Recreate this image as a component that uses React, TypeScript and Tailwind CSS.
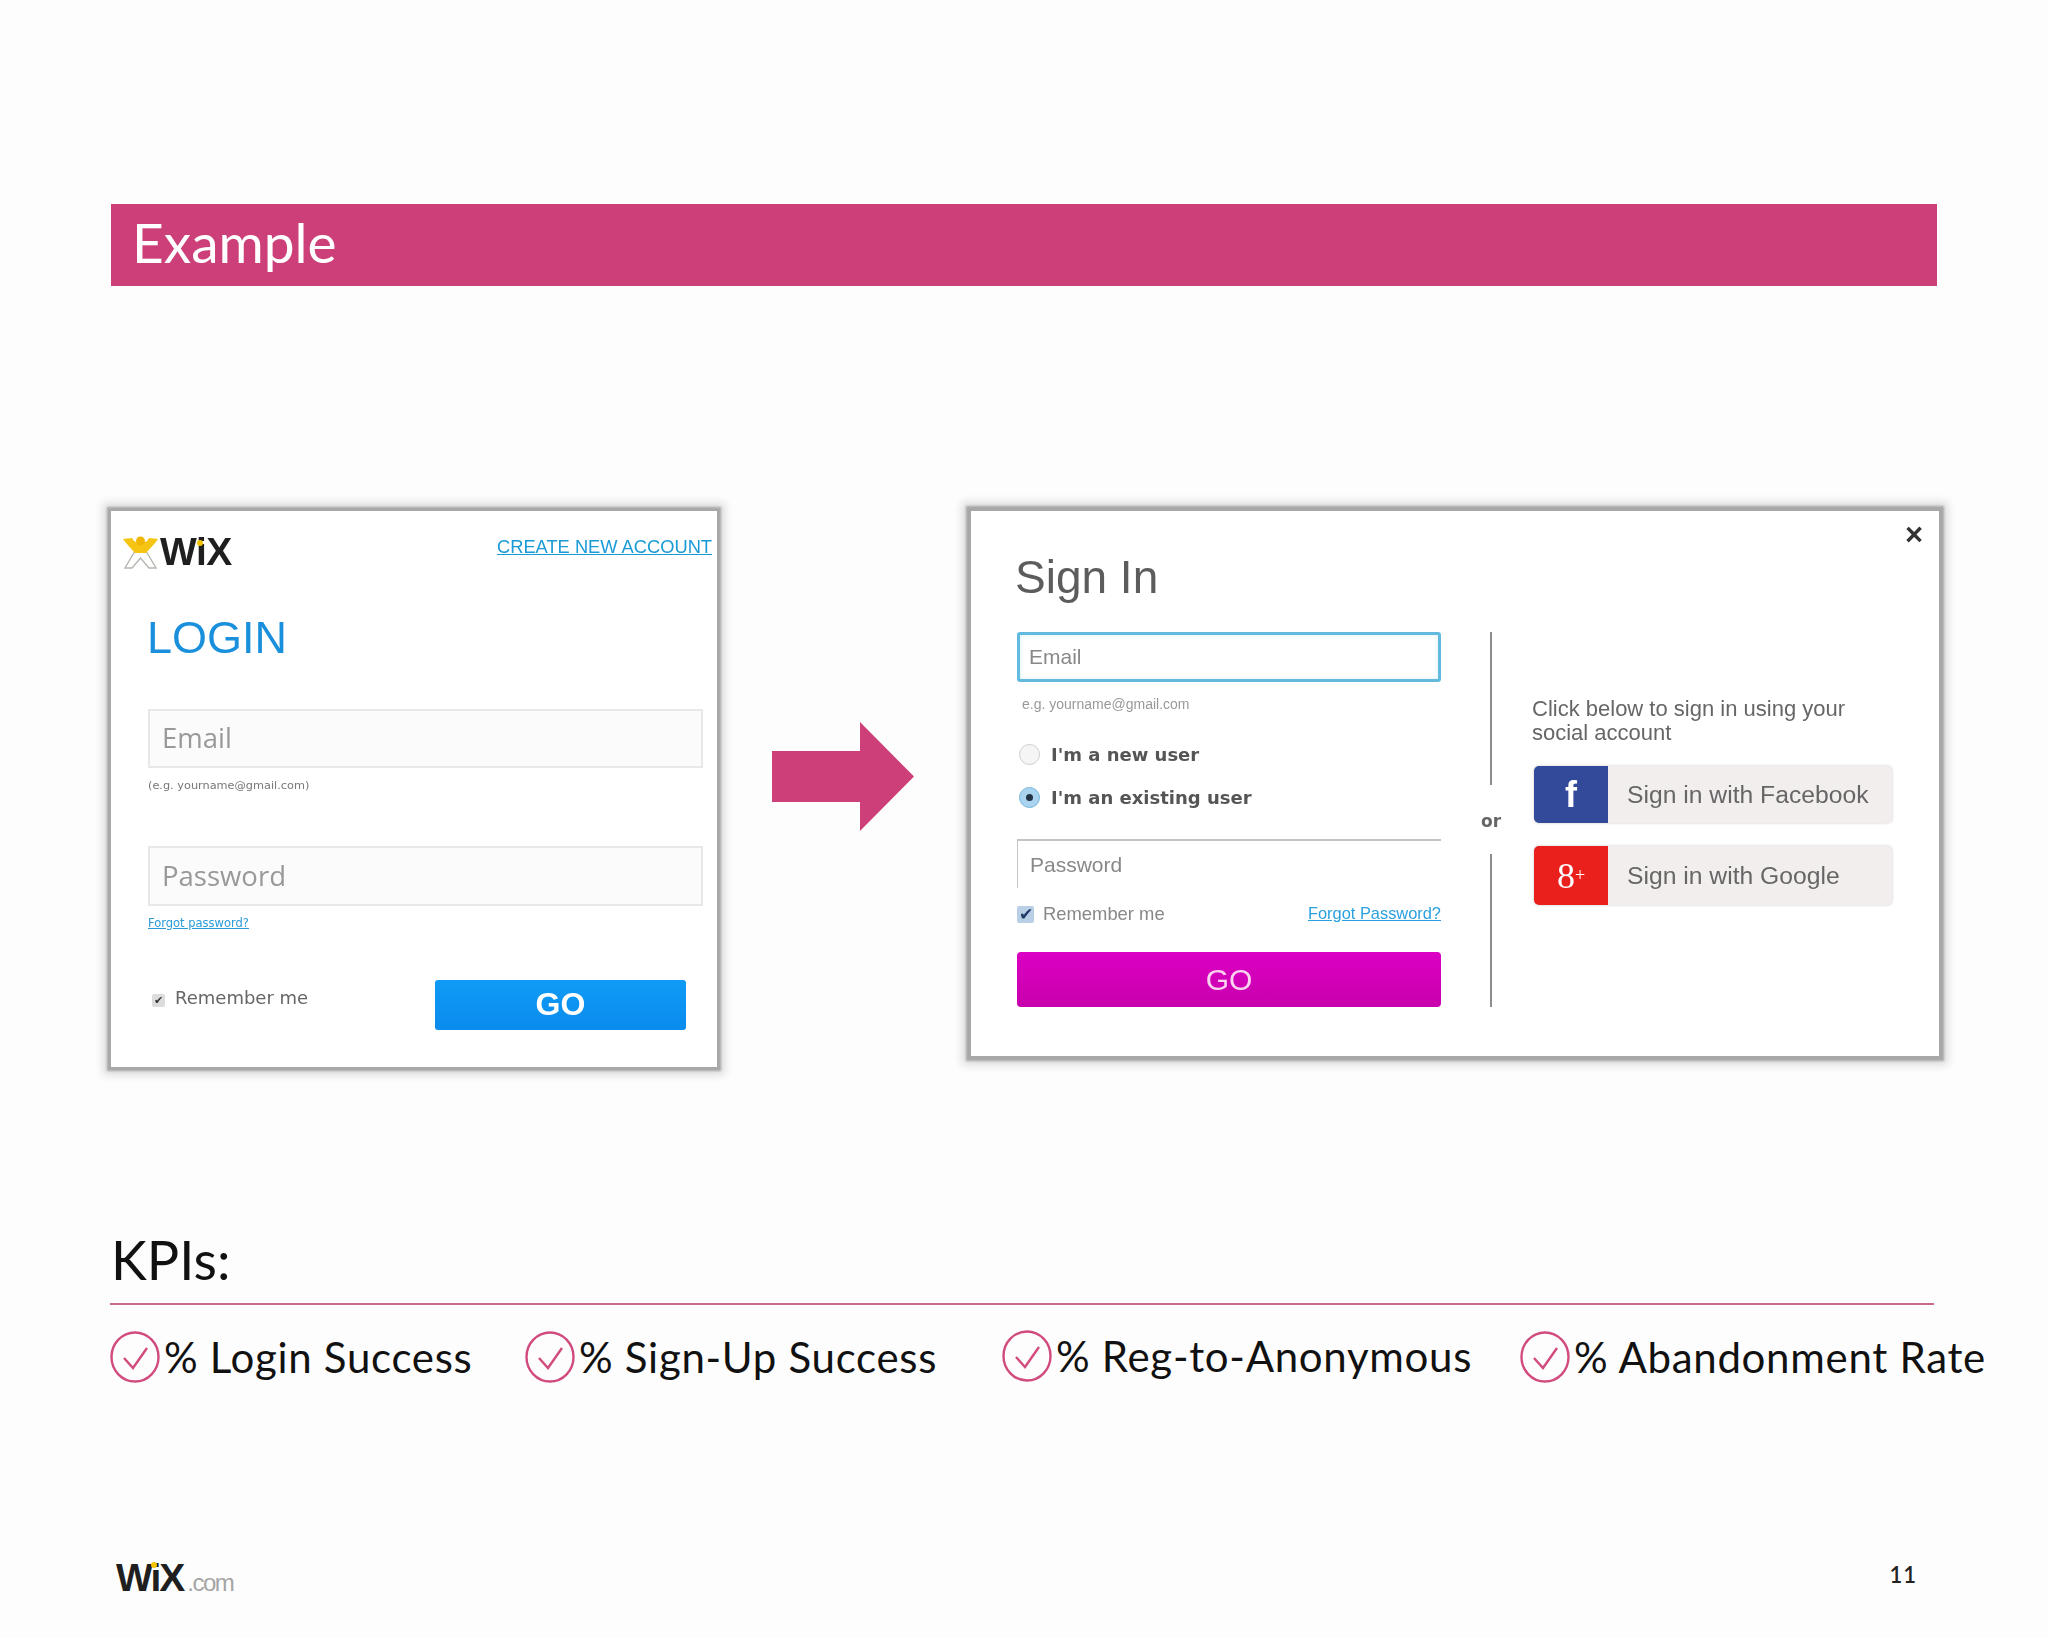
import type { ReactNode } from 'react'

const kpis = [
  { label: '% Login Success', width: 'w-[415px]', offset: '' },
  { label: '% Sign-Up Success', width: 'w-[477px]', offset: '' },
  { label: '% Reg-to-Anonymous', width: 'w-[518px]', offset: '-mt-[3px]' },
  { label: '% Abandonment Rate', width: 'w-[480px]', offset: '' },
]

function WixWord({ size, dot }: { size: string; dot: string }) {
  return (
    <span className={`relative font-['Liberation_Sans',sans-serif] font-bold text-[#1f1f1f] ${size}`}>
      WiX
      <span className={`absolute rounded-full bg-[#f4c400] ${dot}`} />
    </span>
  )
}

function Mascot() {
  return (
    <svg width="35" height="33" viewBox="0 0 35 33" className="shrink-0">
      <path d="M12 15 L2 32 L9 32 L17.5 22 L26 32 L33 32 L23 15" fill="#fff" stroke="#b5b5b0" strokeWidth="1.4" />
      <path
        d="M0 3 L9 2 C11 6 14 7 17.5 7 C21 7 24 6 26 2 L35 3 C32 8 27 12 23 17 L12 17 C8 12 3 8 0 3Z"
        fill="#f6c513"
      />
      <circle cx="17.5" cy="5" r="4.5" fill="#f2b705" />
    </svg>
  )
}

function KpiCheck() {
  return (
    <svg width="50" height="52" viewBox="0 0 50 52" className="shrink-0">
      <ellipse cx="25" cy="26" rx="23.5" ry="24.5" fill="none" stroke="#d14b7e" strokeWidth="2.4" />
      <path d="M14 27 L23 37 L37 17" fill="none" stroke="#d14b7e" strokeWidth="2.4" />
    </svg>
  )
}

function LeftCard() {
  return (
    <div className="h-[556px] w-[606px] shrink-0 bg-white shadow-[0_0_2px_4px_#a8a8a8,0_0_8px_8px_#dcdcdc]">
      <div className="flex h-full flex-col blur-[0.5px]">
        <div className="flex items-start justify-between pt-[26px] pr-[5px] pl-[12px]">
          <div className="flex h-[30px] items-center gap-[2px] leading-[30px]">
            <Mascot />
            <WixWord size="text-[39px] tracking-[-0.5px]" dot="top-[3px] left-[37px] h-[6px] w-[6px]" />
          </div>
          <a className="font-['Liberation_Sans',sans-serif] text-[18.3px] leading-[20px] text-[#1a9ad6] underline">
            CREATE NEW ACCOUNT
          </a>
        </div>
        <h2 className="mt-[48px] ml-[36px] font-['Liberation_Sans',sans-serif] text-[45px] leading-[46px] text-[#1a90dd]">
          LOGIN
        </h2>
        <div className="mt-[48px] ml-[37px] flex h-[59px] w-[555px] items-center border-2 border-[#e9e7e9] bg-[#fbfbfb] pb-[2px] pl-[12px] font-['Open_Sans',sans-serif] text-[27.5px] text-[#999]">
          Email
        </div>
        <p className="mt-[10px] ml-[37px] font-['DejaVu_Sans',sans-serif] text-[11.3px] leading-[16px] text-[#777]">
          (e.g. yourname@gmail.com)
        </p>
        <div className="mt-[52px] ml-[37px] flex h-[60px] w-[555px] items-center border-2 border-[#e9e7e9] bg-[#fbfbfb] pl-[12px] font-['Open_Sans',sans-serif] text-[27.5px] text-[#999]">
          Password
        </div>
        <a className="mt-[9px] ml-[37px] font-['DejaVu_Sans',sans-serif] text-[11.5px] leading-[16px] text-[#2a9bd8] underline">
          Forgot password?
        </a>
        <div className="mt-[49px] ml-[37px] flex w-[538px] items-start justify-between">
          <label className="mt-[7px] ml-[4px] flex h-[20px] items-center gap-[10px] font-['DejaVu_Sans',sans-serif] text-[18px] text-[#666]">
            <span className="mt-[6px] flex h-[13px] w-[13px] items-center justify-center rounded-[2px] bg-[#dcdcdc] text-[11px] leading-none text-[#333]">
              ✔
            </span>
            Remember me
          </label>
          <button className="h-[50px] w-[251px] rounded-[3px] bg-gradient-to-b from-[#0f9bf5] to-[#0a8bee] pb-[2px] font-['Liberation_Sans',sans-serif] text-[32px] font-bold text-white">
            GO
          </button>
        </div>
      </div>
    </div>
  )
}

function RadioRow({ label, active }: { label: string; active?: boolean }) {
  return (
    <div className="flex h-[24px] items-center gap-[11px] pl-[2px] font-['DejaVu_Sans',sans-serif] text-[18px] font-bold text-[#555]">
      <span
        className={`flex h-[21px] w-[21px] items-center justify-center rounded-full border ${active ? 'border-[#74b5dd] bg-[#a9d3ee]' : 'border-[#ccc] bg-[#f5f5f5]'}`}
      >
        {active && <span className="h-[7px] w-[7px] rounded-full bg-[#234]" />}
      </span>
      {label}
    </div>
  )
}

type SocialProps = {
  label: string
  color: string
  glyph: ReactNode
  height: string
  glyphClass: string
}

function SocialButton({ label, color, glyph, height, glyphClass }: SocialProps) {
  return (
    <div className={`ml-[2px] flex w-[358px] overflow-hidden rounded-[5px] bg-[#f3eeee] shadow-[0_0_3px_#c8c8c8] ${height}`}>
      <span className={`flex w-[74px] shrink-0 items-center justify-center text-white ${color} ${glyphClass}`}>{glyph}</span>
      <span className="flex items-center pl-[19px] font-['Liberation_Sans',sans-serif] text-[24.7px] text-[#666]">{label}</span>
    </div>
  )
}

function RightCard() {
  return (
    <div className="h-[545px] w-[968px] shrink-0 bg-white shadow-[0_0_2px_5px_#a8a8a8,0_0_8px_9px_#dcdcdc]">
      <div className="h-full blur-[0.7px]">
        <div className="flex items-start justify-between pt-[42px] pr-[16px] pl-[44px]">
          <h2 className="font-['Liberation_Sans',sans-serif] text-[46px] leading-[48px] text-[#5c5c5c]">Sign In</h2>
          <span className="-mt-[33px] font-['Liberation_Sans',sans-serif] text-[31px] leading-[30px] font-bold text-[#333]">×</span>
        </div>
        <div className="mt-[31px] ml-[46px] flex items-start">
          <div className="flex w-[424px] shrink-0 flex-col">
            <div className="flex h-[50px] items-center rounded-[3px] border-[3px] border-[#62bbdf] pl-[9px] font-['Liberation_Sans',sans-serif] text-[21px] text-[#888] shadow-[inset_0_0_4px_#d9f1fa]">
              Email
            </div>
            <p className="mt-[14px] pl-[5px] font-['Liberation_Sans',sans-serif] text-[14px] leading-[16px] text-[#999]">
              e.g. yourname@gmail.com
            </p>
            <div className="mt-[30px]">
              <RadioRow label="I'm a new user" />
            </div>
            <div className="mt-[19px]">
              <RadioRow label="I'm an existing user" active />
            </div>
            <div className="mt-[30px] flex h-[49px] items-center border-t-2 border-l border-[#c4c4c4] pl-[12px] font-['Liberation_Sans',sans-serif] text-[21px] text-[#888]">
              Password
            </div>
            <div className="mt-[16px] flex h-[20px] items-center justify-between font-['Liberation_Sans',sans-serif]">
              <label className="flex items-center gap-[9px] text-[18.4px] text-[#888]">
                <span className="flex h-[17px] w-[17px] items-center justify-center rounded-[2px] bg-[#b9cfe6] text-[17px] leading-none text-[#223a66]">
                  ✔
                </span>
                Remember me
              </label>
              <a className="-mt-[2px] text-[16.4px] text-[#2aa0e0] underline">Forgot Password?</a>
            </div>
            <button className="mt-[28px] h-[55px] rounded-[4px] bg-gradient-to-b from-[#dc00c4] to-[#c800ac] font-['Liberation_Sans',sans-serif] text-[30px] text-[#f9d3f0]">
              GO
            </button>
          </div>
          <div className="ml-[30px] flex h-[375px] w-[40px] shrink-0 flex-col items-center">
            <span className="h-[153px] w-[2px] bg-[#8c8c8c]" />
            <span className="flex h-[69px] items-center pt-[4px] font-['DejaVu_Sans',sans-serif] text-[17px] font-bold text-[#666]">or</span>
            <span className="h-[153px] w-[2px] bg-[#8c8c8c]" />
          </div>
          <div className="ml-[21px] flex flex-col pt-[65px]">
            <p className="w-[340px] font-['Liberation_Sans',sans-serif] text-[22px] leading-[24px] text-[#666]">
              Click below to sign in using your social account
            </p>
            <div className="mt-[21px]">
              <SocialButton
                label="Sign in with Facebook"
                color="bg-[#33499a]"
                glyph="f"
                height="h-[57px]"
                glyphClass="font-['Liberation_Sans',sans-serif] text-[36px] font-bold"
              />
            </div>
            <div className="mt-[23px]">
              <SocialButton
                label="Sign in with Google"
                color="bg-[#e9201c]"
                glyph={
                  <>
                    8<span className="text-[18px]">+</span>
                  </>
                }
                height="h-[59px]"
                glyphClass="font-['Liberation_Serif',serif] text-[36px]"
              />
            </div>
          </div>
        </div>
      </div>
    </div>
  )
}

export default function App() {
  return (
    <div className="flex h-[1638px] w-[2048px] flex-col overflow-hidden bg-[#fefdfe] pt-[204px] pl-[111px] font-['Lato',sans-serif]">
      <div className="flex h-[82px] w-[1826px] items-center bg-[#cd3f78] pb-[5px] pl-[21px] text-[55px] text-white">Example</div>

      <div className="mt-[225px] flex items-start">
        <LeftCard />
        <svg width="142" height="109" viewBox="0 0 142 109" className="mt-[211px] ml-[55px] shrink-0">
          <path d="M0 29 H88 V0 L142 54.5 L88 109 V80 H0Z" fill="#cd3f78" />
        </svg>
        <div className="ml-[57px]">
          <RightCard />
        </div>
      </div>

      <h3 className="mt-[160px] text-[54px] leading-[66px] text-[#111]">KPIs:</h3>
      <div className="mt-[10px] -ml-[1px] h-[2px] w-[1824px] bg-[#c76a90]" />

      <div className="mt-[26px] -ml-[1px] flex">
        {kpis.map((kpi) => (
          <div key={kpi.label} className={`flex items-center gap-[4px] ${kpi.width} ${kpi.offset}`}>
            <KpiCheck />
            <span className="text-[42px] leading-[52px] tracking-[0.7px] whitespace-nowrap text-[#111]">{kpi.label}</span>
          </div>
        ))}
      </div>

      <div className="mt-auto flex w-[1806px] items-start justify-between pb-[35px]">
        <div className="ml-[5px] flex items-baseline leading-[40px]">
          <WixWord size="text-[39px] tracking-[-2px]" dot="top-[4px] left-[35px] h-[6px] w-[6px]" />
          <span className="ml-[4px] font-['Liberation_Sans',sans-serif] text-[24px] tracking-[-1.5px] text-[#a5a5a5]">.com</span>
        </div>
        <span className="text-[22px] font-semibold tracking-[1px] text-[#222]">11</span>
      </div>
    </div>
  )
}
